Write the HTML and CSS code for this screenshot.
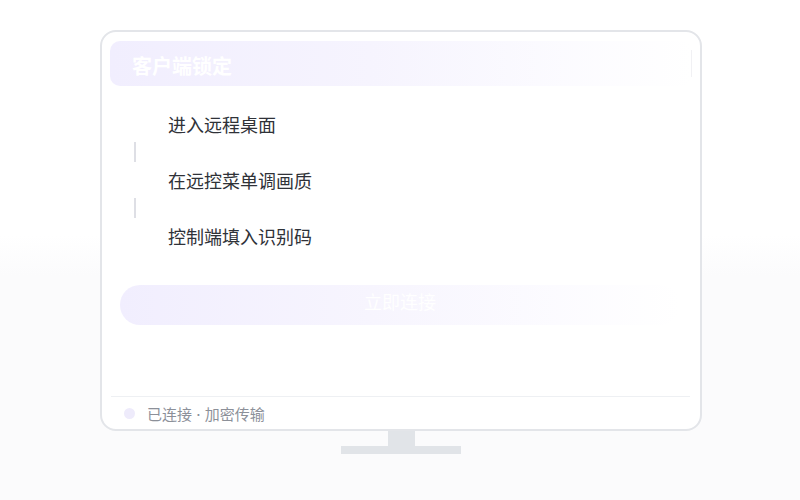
FILE: index.html
```html
<!DOCTYPE html>
<html lang="zh-CN">
<head>
    <meta charset="UTF-8">
    <meta name="viewport" content="width=device-width, initial-scale=1.0">
    <title>客户端锁定</title>
    <link rel="stylesheet" href="styles.css">
</head>
<body>
    <div class="device">
        <div class="screen">
            <div class="head">
                <span class="head-title">客户端锁定</span>
                <span class="head-edge"></span>
            </div>
            <ul class="steps">
                <li class="step"><span class="step-num">1</span><span class="step-text">进入远程桌面</span></li>
                <li class="step-line"></li>
                <li class="step"><span class="step-num">2</span><span class="step-text">在远控菜单调画质</span></li>
                <li class="step-line"></li>
                <li class="step"><span class="step-num">3</span><span class="step-text">控制端填入识别码</span></li>
            </ul>
            <button class="connect">立即连接</button>
            <div class="status">
                <span class="status-dot"></span>
                <span class="status-text">已连接 · 加密传输</span>
            </div>
        </div>
        <div class="neck"></div>
        <div class="base"></div>
    </div>
</body>
</html>
```

FILE: styles.css
```css
html, body { margin: 0; }

body {
    height: 500px;
    background: linear-gradient(180deg, #fff 0%, #fff 47%, #fbfbfc 55%, #fbfbfc 100%);
    font-family: "Inter", "Noto Sans CJK SC", sans-serif;
}

.device {
    width: 602px;
    padding-top: 30px;
    margin-left: 100px;
    display: flex;
    flex-direction: column;
    align-items: center;
}

.screen {
    width: 100%;
    height: 401px;
    box-sizing: border-box;
    border: 2px solid #e3e5e9;
    border-radius: 16px;
    background: #fff;
    padding: 9px 8px 0 8px;
    display: flex;
    flex-direction: column;
}

.head {
    height: 45px;
    box-sizing: border-box;
    padding: 4px 0 0 22px;
    border-radius: 10px;
    background: linear-gradient(90deg, #f1eefe 0%, #f6f4fe 45%, rgba(250, 249, 255, 0.6) 80%, rgba(255, 255, 255, 0) 100%);
    display: flex;
    align-items: center;
    justify-content: space-between;
}

.head-title {
    color: #fff;
    font-size: 20px;
    font-weight: 700;
}

.head-edge {
    width: 1px;
    height: 27px;
    margin-top: -4px;
    background: #f1f1f4;
}

.steps {
    list-style: none;
    margin: 20px 0 0 0;
    padding: 0 0 0 13px;
}

.step {
    height: 36px;
    display: flex;
    align-items: center;
    gap: 21px;
}

.step-num {
    width: 24px;
    text-align: center;
    color: #fff;
    font-size: 13px;
}

.step-text {
    font-size: 18px;
    color: #2f3238;
}

.step-line {
    width: 2px;
    height: 20px;
    margin-left: 11px;
    background: #dedfe5;
}

.connect {
    margin: 31px 0 0 10px;
    width: 560px;
    height: 40px;
    padding: 0 0 4px 0;
    border: 0;
    border-radius: 20px;
    background: linear-gradient(90deg, #f1eefe 0%, #f7f5fe 45%, rgba(251, 250, 255, 0.7) 80%, rgba(255, 255, 255, 0) 100%);
    color: #fff;
    font-family: serif;
    font-size: 18px;
    line-height: 1;
}

.status {
    margin-top: auto;
    height: 32px;
    border-top: 1px solid #eef0f3;
    margin-left: 1px;
    margin-right: 2px;
    display: flex;
    align-items: center;
    gap: 12px;
    padding-left: 13px;
}

.status-dot {
    width: 11px;
    height: 11px;
    border-radius: 50%;
    background: #eeebfb;
}

.status-text {
    font-size: 15px;
    color: #8c9099;
}

.neck {
    width: 27px;
    height: 15px;
    background: #e1e4e8;
}

.base {
    width: 120px;
    height: 8px;
    background: #e1e4e8;
}
```
